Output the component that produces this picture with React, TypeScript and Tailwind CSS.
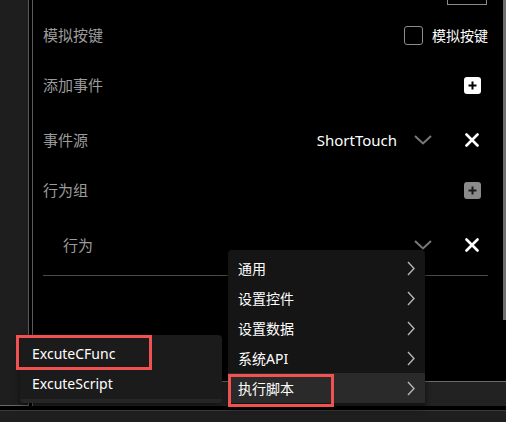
import React from "react";

const FONT = { fontFamily: '"Noto Sans", "Noto Sans CJK SC", sans-serif' };

function PlusBox({ muted }: { muted?: boolean }) {
  return (
    <span
      className={
        "grid size-[17px] place-items-center rounded-[3px] " +
        (muted ? "bg-[#8a8a8a] text-[#1a1a1a]" : "bg-white text-black")
      }
    >
      <svg width="9" height="9" viewBox="0 0 9 9">
        <path d="M4.5 0.5v8M0.5 4.5h8" stroke="currentColor" strokeWidth="2" />
      </svg>
    </span>
  );
}

function Close() {
  return (
    <svg width="14" height="14" viewBox="0 0 14 14" className="text-white">
      <path d="M1.5 1.5l11 11M12.5 1.5l-11 11" stroke="currentColor" strokeWidth="2.6" strokeLinecap="round" />
    </svg>
  );
}

function ChevronDown() {
  return (
    <svg width="18" height="10" viewBox="0 0 18 10" className="text-[#7a7a7a]">
      <path d="M1 1l8 7.5L17 1" stroke="currentColor" strokeWidth="2" fill="none" />
    </svg>
  );
}

function ChevronRight() {
  return (
    <svg width="8" height="15" viewBox="0 0 8 15" className="text-[#b5b5b5]">
      <path d="M1 1l6 6.5L1 14" stroke="currentColor" strokeWidth="1.4" fill="none" />
    </svg>
  );
}

function Row({
  label,
  indent,
  className,
  children,
}: {
  label: string;
  indent?: boolean;
  className: string;
  children?: React.ReactNode;
}) {
  return (
    <div className={"flex items-center " + className}>
      <span className={"text-[15px] text-[#9c9c9c] " + (indent ? "pl-[20px]" : "")}>{label}</span>
      <div className="ml-auto flex items-center">{children}</div>
    </div>
  );
}

const menu = ["通用", "设置控件", "设置数据", "系统API", "执行脚本"];

export default function App() {
  return (
    <div className="relative flex h-[422px] w-[506px] flex-col overflow-hidden bg-black" style={FONT}>
      <div className="flex h-[406px]">
        {/* left dock strip */}
        <div className="w-[28px] border-b border-[#6a6a6a] bg-[#1e1e1e]" />
        <div className="w-[1px] bg-[#5a5a5a]" />
        <div className="w-[3px] bg-black" />
        <div className="w-[1px] bg-[#5a5a5a]" />

        <div className="flex flex-1 flex-col">
          <div className="flex flex-1">
            <div className="flex flex-1 flex-col pl-[10px] pr-[15px]">
              <div className="ml-auto mr-[1px] h-[5px] w-[40px] border border-t-0 border-[#8a8a8a]" />
              <Row label="模拟按键" className="mt-[5px] h-[50px]">
                <span className="size-[19px] rounded-[3px] border border-[#8c8c8c]" />
                <span className="ml-[9px] text-[14px] text-white">模拟按键</span>
              </Row>
              <Row label="添加事件" className="h-[50px]">
                <div className="flex w-[32px] justify-center">
                  <PlusBox />
                </div>
              </Row>
              <Row label="事件源" className="mt-[5px] h-[50px]">
                <span className="text-[15px] text-white">ShortTouch</span>
                <span className="ml-[17px] mr-[24px] flex">
                  <ChevronDown />
                </span>
                <div className="flex w-[32px] justify-center">
                  <Close />
                </div>
              </Row>
              <Row label="行为组" className="h-[50px]">
                <div className="flex w-[32px] justify-center">
                  <PlusBox muted />
                </div>
              </Row>
              <Row label="行为" indent className="mt-[5px] h-[50px]">
                <span className="mr-[24px] flex">
                  <ChevronDown />
                </span>
                <div className="flex w-[32px] justify-center">
                  <Close />
                </div>
              </Row>
              <div className="mt-[5px] h-[1px] bg-[#4a4a4a]" />
            </div>
            <div className="w-[3px]">
              <div className="h-[320px] bg-[#6e6e6e]" />
            </div>
          </div>
          <div className="h-[25px] border-t border-[#6a6a6a] bg-[#222222]" />
        </div>
      </div>
      <div className="h-[4px] bg-black" />
      <div className="flex-1 border-t border-[#3a3a3a] bg-[#1f1f1f]" />

      {/* context menu */}
      <div className="absolute left-[228px] top-[250px] flex w-[197px] flex-col rounded-[4px] bg-[#151515] pb-[3px] pt-[3px] shadow-[0_2px_6px_rgba(0,0,0,0.6)]">
        {menu.map((m, i) => (
          <div
            key={m}
            className={
              "flex h-[30px] items-center pl-[10px] pr-[10px] text-[14px] text-white " +
              (i === menu.length - 1 ? "bg-[#2a2a2a]" : "")
            }
          >
            <span>{m}</span>
            <span className="ml-auto flex">
              <ChevronRight />
            </span>
          </div>
        ))}
      </div>
      <div className="absolute left-[228px] top-[374px] h-[33px] w-[106px] border-[3px] border-[#f05252]" />

      {/* submenu */}
      <div className="absolute left-[20px] top-[335px] flex h-[68px] w-[202px] flex-col rounded-[4px] bg-[#1b1b1b] pt-[3px] shadow-[0_2px_6px_rgba(0,0,0,0.6)]">
        <div className="flex h-[30px] items-center pl-[12px] text-[14px] text-white">ExcuteCFunc</div>
        <div className="flex h-[30px] items-center pl-[12px] text-[14px] text-white">ExcuteScript</div>
        <div className="mt-auto h-[4px] rounded-b-[4px] bg-[#262626]" />
      </div>
      <div className="absolute left-[16px] top-[335px] h-[35px] w-[136px] border-[3px] border-[#f05252]" />
    </div>
  );
}
